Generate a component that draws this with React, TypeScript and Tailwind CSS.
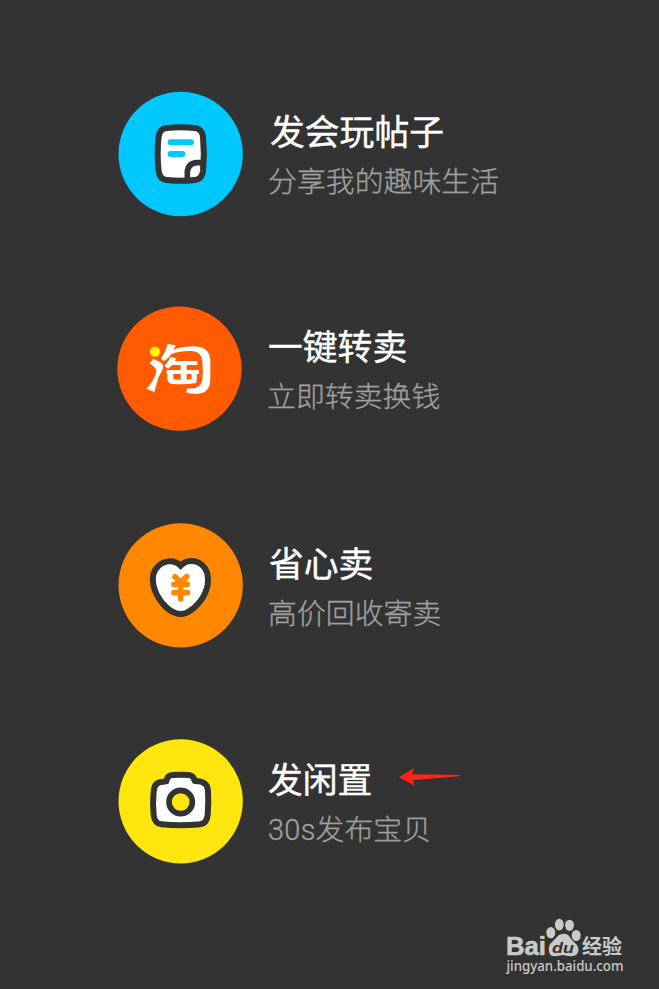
import type { ReactNode } from 'react'

interface PublishOption {
  id: string
  title: string
  subtitle: ReactNode
  icon: ReactNode
  rowClass?: string
  textClass: string
  titleClass: string
  pointed?: boolean
}

function NoteIcon() {
  return (
    <svg viewBox="24 21 378 378" className="size-[126px] shrink-0">
      <circle cx="212" cy="210" r="186.5" fill="#00c8ff" />
      <path
        d="M170 132Q212 127 254 132Q276 134 279 158Q284 209 279 261Q276 286 254 288Q212 293 170 288Q149 286 146 261Q140 209 146 158Q149 134 170 132Z"
        fill="#fff"
        stroke="#333"
        strokeWidth="18"
      />
      <path d="M232 284V266Q233 237 262 236H276" fill="none" stroke="#333" strokeWidth="17" />
      <path d="M182 175H243M182 210H217" stroke="#00c8ff" strokeWidth="18" strokeLinecap="round" />
    </svg>
  )
}

function TaoIcon() {
  return (
    <svg viewBox="24 21 378 378" className="size-[126px] shrink-0 overflow-visible">
      <circle cx="208.5" cy="209" r="186.5" fill="#ff5b00" />
      <circle cx="135" cy="158" r="15" fill="#ffff00" />
      <g fill="#fff">
        <path d="M119 193L130 179L151 190Q163 197 158 211Q153 221 145 236L133 279L109 269Q128 252 137 225Q141 214 135 206Z" />
        <path d="M173 135L198 139L190 152Q219 142 254 142Q302 144 301 190V236Q302 282 264 284Q243 286 228 280L232 267Q270 275 277 243Q280 217 277 187Q275 157 244 156Q211 155 184 165Q174 180 162 187L153 179Q168 158 173 135Z" />
        <path d="M181 174L198 178L195 186H262V198H230V213H267V225H230V242L245 240L244 225H261L259 252Q224 257 190 255Q173 254 172 239V225H190V237Q190 242 197 242H212V225H170V213H212V198H187L175 209L163 201Q175 189 181 174Z" />
      </g>
    </svg>
  )
}

function HeartIcon() {
  return (
    <svg viewBox="24 21 378 378" className="size-[126px] shrink-0">
      <circle cx="212" cy="211" r="186.5" fill="#ff8800" />
      <path
        d="M212 152C195 133 164 135 146 152C130 166 126 188 130 209C138 251 171 285 196 294Q212 300 228 294C256 282 286 248 293 209C296 186 291 162 276 150C257 133 229 134 212 152Z"
        fill="#fff"
        stroke="#333"
        strokeWidth="18"
      />
      <path
        d="M195 185L212 202L230 185M192 208H232M192 233H232M212 202V251"
        fill="none"
        stroke="#ff8800"
        strokeWidth="17"
        strokeLinecap="round"
      />
    </svg>
  )
}

function CameraIcon() {
  return (
    <svg viewBox="24 21 378 378" className="size-[126px] shrink-0">
      <circle cx="212" cy="211" r="186.5" fill="#ffe60f" />
      <path
        d="M169 151Q171 133 188 132Q212 130 237 132Q251 134 254 150Q277 150 287 160Q294 167 294 184Q296 214 293 252Q291 277 270 280Q212 286 154 280Q134 278 131 252Q127 217 131 181Q133 153 158 152Z"
        fill="#fff"
        stroke="#333"
        strokeWidth="18"
        strokeLinejoin="round"
      />
      <circle cx="212" cy="213" r="35" fill="#ffe60f" stroke="#333" strokeWidth="17" />
    </svg>
  )
}

function Arrow() {
  return (
    <svg viewBox="418 50 183 54" className="-mt-[3px] ml-[27px] h-[18px] w-[61px]">
      <path d="M418 78L463 50L457 69L598 71Q603 73 598 75L458 87L466 104Z" fill="#ff2418" />
    </svg>
  )
}

const options: PublishOption[] = [
  {
    id: 'post',
    title: '发会玩帖子',
    subtitle: '分享我的趣味生活',
    icon: <NoteIcon />,
    textClass: 'ml-[24px] pt-[19px]',
    titleClass: 'ml-[2px]',
  },
  {
    id: 'resell',
    title: '一键转卖',
    subtitle: '立即转卖换钱',
    icon: <TaoIcon />,
    rowClass: '-mt-px',
    textClass: 'ml-[23px] pt-[19px]',
    titleClass: 'ml-[1px]',
  },
  {
    id: 'easy',
    title: '省心卖',
    subtitle: '高价回收寄卖',
    icon: <HeartIcon />,
    textClass: 'ml-[24px] pt-[20px]',
    titleClass: 'ml-[1px]',
  },
  {
    id: 'idle',
    title: '发闲置',
    subtitle: (
      <>
        <span className="font-['Roboto'] tracking-[0.3px]">30s</span>发布宝贝
      </>
    ),
    icon: <CameraIcon />,
    textClass: 'ml-[24px] pt-[20px]',
    titleClass: '',
    pointed: true,
  },
]

function OptionRow({ option }: { option: PublishOption }) {
  return (
    <div className={`ml-[118px] flex h-[126px] ${option.rowClass ?? ''}`}>
      {option.icon}
      <div className={`whitespace-nowrap ${option.textClass}`}>
        <div className="flex h-[40px] items-center">
          <h2
            className={`text-[34.8px] leading-[40px] font-normal text-white [-webkit-text-stroke:0.4px_#fff] ${option.titleClass}`}
          >
            {option.title}
          </h2>
          {option.pointed && <Arrow />}
        </div>
        <p className="mt-[12px] text-[28.9px] leading-[34px] font-light text-[#a0a0a0] [-webkit-text-stroke:0.3px_#a0a0a0]">
          {option.subtitle}
        </p>
      </div>
    </div>
  )
}

function Watermark() {
  return (
    <svg
      viewBox="0 0 126 68"
      className="absolute right-[29px] bottom-[11px] h-[68px] w-[126px]"
      fill="#cacaca"
    >
      <text
        x="2"
        y="45"
        fontSize="25.5"
        fontWeight="700"
        textLength="40"
        lengthAdjust="spacingAndGlyphs"
        stroke="#cacaca"
        strokeWidth="0.6"
        className="font-['Liberation_Sans']"
      >
        Bai
      </text>
      <ellipse cx="46.8" cy="22.8" rx="4.5" ry="5.7" />
      <ellipse cx="55.3" cy="14.6" rx="4.4" ry="5.8" />
      <ellipse cx="65.5" cy="15.3" rx="4.4" ry="5.6" />
      <ellipse cx="72.2" cy="25.5" rx="4.5" ry="5.6" />
      <path d="M59 24Q64 23 67 29L73 35Q77 42 71 45.500Q66 47 59 45Q51 47 47 45.500Q43 41 46 34L53 27Q55 24 59 24Z" />
      <text x="48" y="43" fontSize="14.5" fontWeight="700" fill="#333" textLength="22" lengthAdjust="spacingAndGlyphs" className="font-['Liberation_Sans'] italic">
        du
      </text>
      <text x="78" y="43.5" fontSize="20" fontWeight="700" textLength="40" lengthAdjust="spacingAndGlyphs" className="font-['Noto_Sans_CJK_SC']">
        经验
      </text>
      <text x="2.5" y="61" fontSize="14.5" fontWeight="500" textLength="117" lengthAdjust="spacingAndGlyphs" className="font-['Noto_Sans']">
        jingyan.baidu.com
      </text>
    </svg>
  )
}

export default function App() {
  return (
    <main className="relative flex h-[989px] w-[659px] flex-col gap-[90px] overflow-hidden bg-[#333333] pt-[91px] font-['Noto_Sans_CJK_SC',sans-serif]">
      {options.map((o) => (
        <OptionRow key={o.id} option={o} />
      ))}
      <Watermark />
    </main>
  )
}
